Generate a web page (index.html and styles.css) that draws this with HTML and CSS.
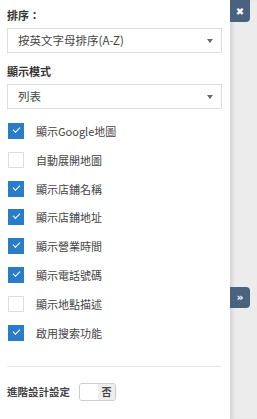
FILE: index.html
```html
<!DOCTYPE html>
<html lang="zh-Hant">
<head>
    <meta charset="UTF-8">
    <title>地圖設定</title>
    <link rel="stylesheet" href="styles.css">
</head>
<body>
    <div class="panel">
        <div class="label">排序：</div>
        <div class="select">按英文字母排序(A-Z)<span class="arrow"></span></div>

        <div class="label mode">顯示模式</div>
        <div class="select">列表<span class="arrow"></span></div>

        <ul class="options">
            <li><span class="check on"></span>顯示Google地圖</li>
            <li><span class="check"></span>自動展開地圖</li>
            <li><span class="check on"></span>顯示店鋪名稱</li>
            <li><span class="check on"></span>顯示店鋪地址</li>
            <li><span class="check on"></span>顯示營業時間</li>
            <li><span class="check on"></span>顯示電話號碼</li>
            <li><span class="check"></span>顯示地點描述</li>
            <li><span class="check on"></span>啟用搜索功能</li>
        </ul>

        <div class="advanced">
            <span>進階設計設定</span>
            <div class="toggle"><span class="blank"></span><span class="no">否</span></div>
        </div>
    </div>
    <div class="side">
        <button class="close">&#x2716;</button>
        <button class="expand">&raquo;</button>
    </div>
</body>
</html>
```

FILE: styles.css
```css
body {
    margin: 0;
    display: flex;
    height: 419px;
    overflow: hidden;
    font-family: "Noto Sans CJK TC", "Noto Sans", sans-serif;
    color: #333;
    background-color: #fff;
}

.panel {
    width: 230px;
    box-sizing: border-box;
    padding: 8px 8px 0 7px;
    background-color: #fff;
    font-size: 11px;
}

.label {
    font-weight: bold;
    line-height: 14px;
    height: 14px;
    margin-bottom: 6px;
}

.label.mode {
    margin-top: 11px;
}

.select {
    position: relative;
    height: 25px;
    box-sizing: border-box;
    border: 1px solid #ddd;
    padding-left: 10px;
    line-height: 23px;
    font-size: 11.5px;
    color: #444;
}

.arrow {
    position: absolute;
    right: 8px;
    top: 10px;
    width: 0;
    height: 0;
    border-left: 3.5px solid transparent;
    border-right: 3.5px solid transparent;
    border-top: 4px solid #666;
}

.options {
    list-style: none;
    margin: 14px 0 0 0;
    padding: 0 0 0 1px;
}

.options li {
    display: flex;
    align-items: center;
    height: 16px;
    margin-bottom: 12.8px;
    font-size: 11px;
    color: #444;
}

.check {
    width: 16px;
    height: 16px;
    box-sizing: border-box;
    border: 1px solid #ddd;
    background-color: #fff;
    margin-right: 12px;
    position: relative;
}

.check.on {
    background-color: #2a7cc7;
    border-color: #2a7cc7;
}

.check.on::after {
    content: "";
    position: absolute;
    left: 4px;
    top: 3px;
    width: 6px;
    height: 3px;
    border-left: 1.5px solid #fff;
    border-bottom: 1.5px solid #fff;
    transform: rotate(-45deg);
}

.advanced {
    margin-top: 25px;
    border-top: 1px solid #e6e6e6;
    padding-top: 16px;
    display: flex;
    align-items: center;
    font-size: 10.5px;
    font-weight: bold;
    color: #444;
}

.toggle {
    display: flex;
    margin-left: 9px;
    width: 37px;
    height: 18px;
    box-sizing: border-box;
    border: 1px solid #ccc;
    border-radius: 3px;
    overflow: hidden;
}

.toggle .blank {
    flex: 1;
    background-color: #fff;
}

.toggle .no {
    width: 17px;
    background-color: #eee;
    text-align: center;
    line-height: 16px;
    font-size: 10px;
}

.side {
    flex: 1;
    background-color: #ececec;
    box-shadow: inset 4px 0 4px -2px rgba(0, 0, 0, 0.12);
    display: flex;
    flex-direction: column;
    align-items: flex-start;
}

.side button {
    width: 20px;
    border: none;
    padding: 0;
    background-color: #48627f;
    color: #fff;
    cursor: pointer;
    font-family: "DejaVu Sans", sans-serif;
}

.close {
    height: 22px;
    font-size: 10px;
    font-weight: bold;
    border-radius: 0 0 4px 0;
}

.expand {
    height: 21px;
    margin-top: 265px;
    font-size: 11px;
    font-weight: bold;
    border-radius: 0 4px 4px 0;
}
```
